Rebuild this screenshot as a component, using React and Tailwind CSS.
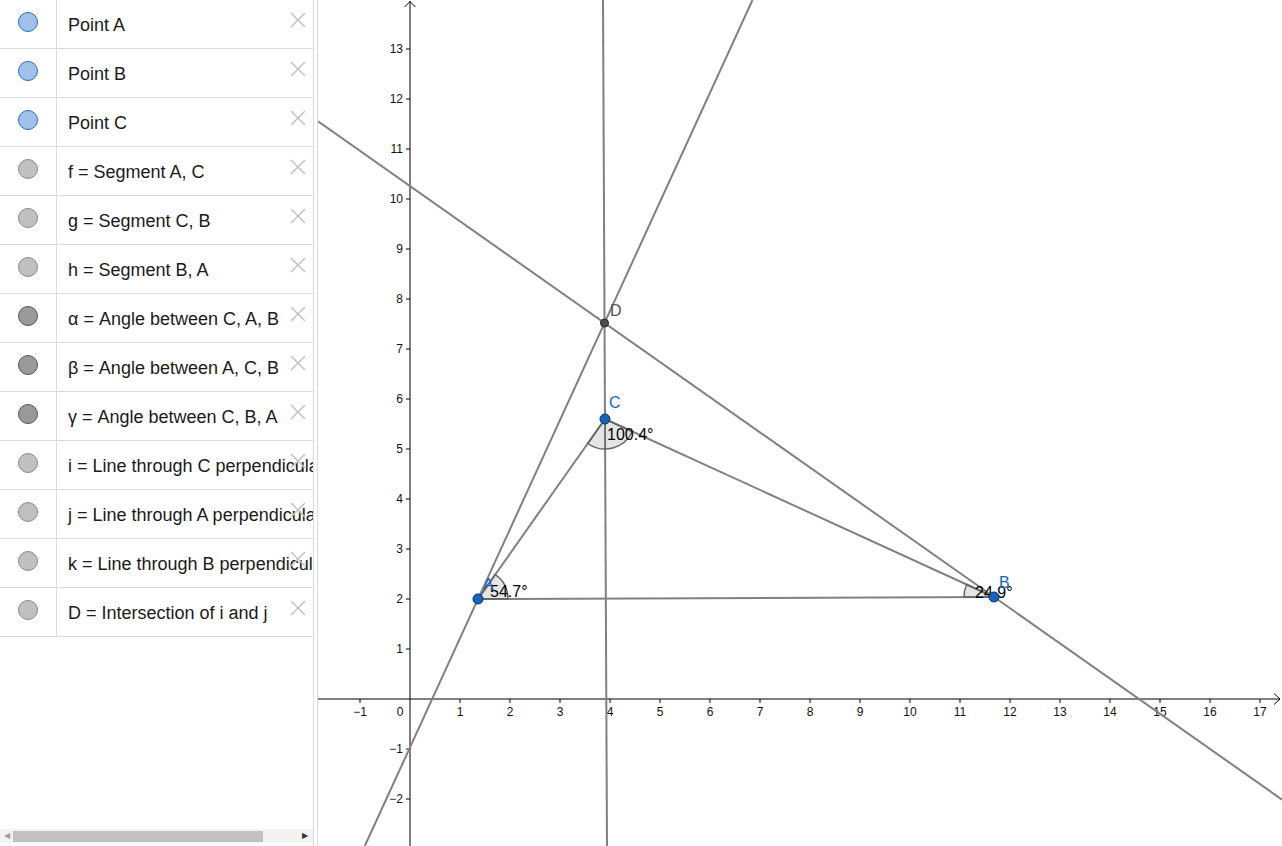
import React from "react";

const rows = [
  { label: "Point A", kind: "point" },
  { label: "Point B", kind: "point" },
  { label: "Point C", kind: "point" },
  { label: "f = Segment A, C", kind: "light" },
  { label: "g = Segment C, B", kind: "light" },
  { label: "h = Segment B, A", kind: "light" },
  { label: "α = Angle between C, A, B", kind: "dark" },
  { label: "β = Angle between A, C, B", kind: "dark" },
  { label: "γ = Angle between C, B, A", kind: "dark" },
  { label: "i = Line through C perpendicular to h", kind: "light" },
  { label: "j = Line through A perpendicular to g", kind: "light" },
  { label: "k = Line through B perpendicular to f", kind: "light" },
  { label: "D = Intersection of i and j", kind: "light" },
];

const dotClass = {
  point: "bg-[#a0c2ea] border-[#2a6bc4]",
  light: "bg-[#c0c0c0] border-[#8a8a8a]",
  dark: "bg-[#999999] border-[#555555]",
};

const Row = ({ label, kind }) => (
  <div className="relative flex h-[49px] border-b border-[#dcdcdc]">
    <div className="flex w-[57px] shrink-0 items-start justify-center border-r border-[#dcdcdc] pt-[12px]">
      <span className={`block h-[20px] w-[20px] rounded-full border ${dotClass[kind]}`} />
    </div>
    <div className="flex flex-1 items-center overflow-hidden whitespace-nowrap pl-[11px] pt-[3px] text-[18px] text-[#1a1a1a]">
      {label}
    </div>
    <svg
      className="absolute right-[7px] top-[12px]"
      width="16"
      height="16"
      viewBox="0 0 16 16"
    >
      <path d="M1 1L15 15M15 1L1 15" stroke="#c4c4c4" strokeWidth="1.6" />
    </svg>
  </div>
);

const O = { x: 410, y: 699 };
const U = 50;

const xTicks = [];
for (let n = -1; n <= 17; n++) if (n !== 0) xTicks.push(n);
const yTicks = [];
for (let n = -2; n <= 13; n++) if (n !== 0) yTicks.push(n);

const fmt = (n) => (n < 0 ? "−" + Math.abs(n) : String(n));

const Graphics = () => (
  <svg
    className="block h-full w-full"
    viewBox="318 0 964 846"
    style={{ fontFamily: '"Liberation Sans", Arial, sans-serif' }}
  >
    {/* axes */}
    <line x1="318" y1={O.y} x2="1280" y2={O.y} stroke="#000" strokeWidth="1" />
    <path d="M1274 693.5L1280 699L1274 704.5" fill="none" stroke="#000" strokeWidth="1" />
    <line x1={O.x} y1="1" x2={O.x} y2="846" stroke="#000" strokeWidth="1" />
    <path d="M404.5 7L410 1.5L415.5 7" fill="none" stroke="#000" strokeWidth="1" />

    {xTicks.map((n) => (
      <g key={"x" + n}>
        <line x1={O.x + n * U} y1={O.y} x2={O.x + n * U} y2={O.y + 4} stroke="#000" />
        <text x={O.x + n * U} y="716" fontSize="12" textAnchor="middle" fill="#111">
          {fmt(n)}
        </text>
      </g>
    ))}
    <text x="400" y="716" fontSize="12" textAnchor="middle" fill="#111">
      0
    </text>
    {yTicks.map((n) => (
      <g key={"y" + n}>
        <line x1={O.x - 4} y1={O.y - n * U} x2={O.x} y2={O.y - n * U} stroke="#000" />
        <text x="403" y={O.y - n * U + 4} fontSize="12" textAnchor="end" fill="#111">
          {fmt(n)}
        </text>
      </g>
    ))}

    {/* lines i, j, k */}
    <g stroke="#808080" strokeWidth="2" fill="none">
      <line x1="603" y1="0" x2="607" y2="846" />
      <line x1="752.5" y1="0" x2="364.8" y2="846" />
      <line x1="318" y1="121.4" x2="1282" y2="799.6" />
      {/* triangle */}
      <line x1="478" y1="599" x2="605" y2="419" />
      <line x1="605" y1="419" x2="994" y2="597" />
      <line x1="994" y1="597" x2="478" y2="599" />
    </g>

    {/* angles */}
    <g fill="#000" fillOpacity="0.1" stroke="#666" strokeWidth="1.5">
      <path d="M478 599L508 598.9A30 30 0 0 0 495.3 574.5Z" />
      <path d="M605 419L632.3 431.5A30 30 0 0 1 587.7 443.5Z" />
      <path d="M994 597L964 597.1A30 30 0 0 1 966.7 584.5Z" />
    </g>

    {/* labels */}
    <g fontSize="16">
      <text x="490" y="597" fill="#000">54.7°</text>
      <text x="483" y="590" fill="#1565c0">A</text>
      <text x="607" y="440" fill="#000">100.4°</text>
      <text x="609" y="408" fill="#1565c0">C</text>
      <text x="975" y="598" fill="#000">24.9°</text>
      <text x="999" y="588" fill="#1565c0">B</text>
      <text x="610" y="316" fill="#555">D</text>
    </g>

    {/* points */}
    <g stroke="#0b2f66" strokeWidth="1">
      <circle cx="478" cy="599" r="5" fill="#1565c0" />
      <circle cx="994" cy="597" r="5" fill="#1565c0" />
      <circle cx="605" cy="419" r="5" fill="#1565c0" />
    </g>
    <circle cx="604.5" cy="323" r="4" fill="#4d4d4d" stroke="#222" strokeWidth="1" />
  </svg>
);

const App = () => {
  return (
    <div
      className="flex h-[846px] w-[1282px] overflow-hidden bg-white"
      style={{ fontFamily: '"Liberation Sans", Arial, sans-serif' }}
    >
      <div className="flex w-[314px] shrink-0 flex-col border-r border-[#dcdcdc]">
        <div className="flex flex-col">
          {rows.map((r, i) => (
            <Row key={i} {...r} />
          ))}
        </div>
        <div className="flex-1" />
        <div className="mb-[3px] flex h-[14px] items-center bg-[#f2f2f2] px-[4px]">
          <span className="text-[8px] leading-none text-[#a0a0a0]">◀</span>
          <div className="ml-[3px] h-[11px] w-[250px] bg-[#c1c1c1]" />
          <div className="flex-1" />
          <span className="mr-[1px] text-[8px] leading-none text-[#333]">▶</span>
        </div>
      </div>
      <div className="w-[4px] shrink-0 border-r border-[#dcdcdc]" />
      <div className="relative flex-1">
        <Graphics />
      </div>
    </div>
  );
};

export default App;
